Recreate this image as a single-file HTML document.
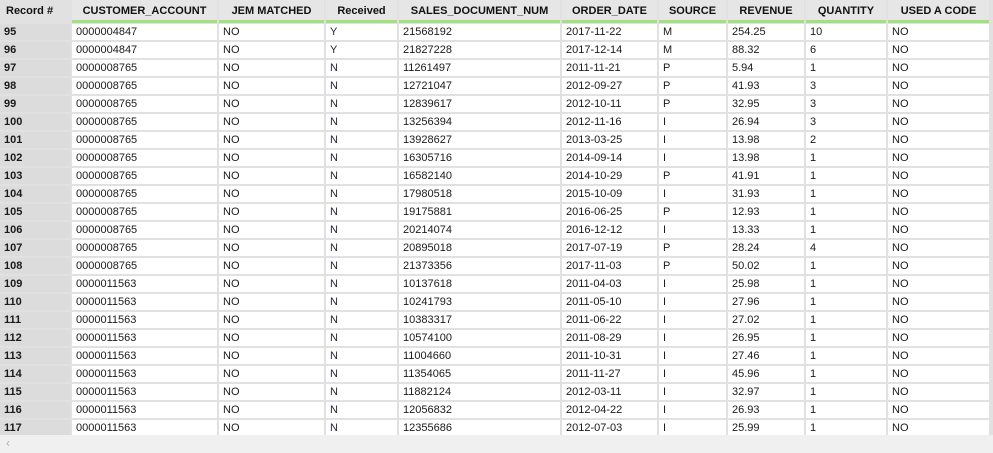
<!DOCTYPE html>
<html><head><style>
body{margin:0;width:993px;height:453px;overflow:hidden;background:#fff;font-family:"Liberation Sans",sans-serif;font-size:11px;color:#1a1a1a;position:relative}
.g{position:absolute;left:0;top:0;width:993px;height:453px;background:#e1e1e1}
.c{position:absolute;height:16px;line-height:17px;background:#fff;padding-left:4px;box-sizing:border-box;white-space:nowrap;overflow:hidden}
.h{position:absolute;top:0;height:23px;background:#e6e6e6;font-weight:bold;text-align:center;box-sizing:border-box;border-bottom:3px solid #9fe27c;line-height:22px;color:#111}
.r{background:#dcdcdc;font-weight:bold}
.sb{position:absolute;left:0;top:435px;width:993px;height:18px;background:#f0f0f0}
</style></head><body>
<div class="g" id="g"></div>
<div class="sb"><span style="position:absolute;left:6px;top:1px;color:#b0b0b0;font-size:12px">&lsaquo;</span></div>
<script>
var L=[0,72,219,326,399,562,659,728,806,888],W=[70,145,105,71,161,95,67,76,80,101];
var H=["Record #","CUSTOMER_ACCOUNT","JEM MATCHED","Received","SALES_DOCUMENT_NUM","ORDER_DATE","SOURCE","REVENUE","QUANTITY","USED A CODE"];
var D=[
["95","0000004847","NO","Y","21568192","2017-11-22","M","254.25","10","NO"],
["96","0000004847","NO","Y","21827228","2017-12-14","M","88.32","6","NO"],
["97","0000008765","NO","N","11261497","2011-11-21","P","5.94","1","NO"],
["98","0000008765","NO","N","12721047","2012-09-27","P","41.93","3","NO"],
["99","0000008765","NO","N","12839617","2012-10-11","P","32.95","3","NO"],
["100","0000008765","NO","N","13256394","2012-11-16","I","26.94","3","NO"],
["101","0000008765","NO","N","13928627","2013-03-25","I","13.98","2","NO"],
["102","0000008765","NO","N","16305716","2014-09-14","I","13.98","1","NO"],
["103","0000008765","NO","N","16582140","2014-10-29","P","41.91","1","NO"],
["104","0000008765","NO","N","17980518","2015-10-09","I","31.93","1","NO"],
["105","0000008765","NO","N","19175881","2016-06-25","P","12.93","1","NO"],
["106","0000008765","NO","N","20214074","2016-12-12","I","13.33","1","NO"],
["107","0000008765","NO","N","20895018","2017-07-19","P","28.24","4","NO"],
["108","0000008765","NO","N","21373356","2017-11-03","P","50.02","1","NO"],
["109","0000011563","NO","N","10137618","2011-04-03","I","25.98","1","NO"],
["110","0000011563","NO","N","10241793","2011-05-10","I","27.96","1","NO"],
["111","0000011563","NO","N","10383317","2011-06-22","I","27.02","1","NO"],
["112","0000011563","NO","N","10574100","2011-08-29","I","26.95","1","NO"],
["113","0000011563","NO","N","11004660","2011-10-31","I","27.46","1","NO"],
["114","0000011563","NO","N","11354065","2011-11-27","I","45.96","1","NO"],
["115","0000011563","NO","N","11882124","2012-03-11","I","32.97","1","NO"],
["116","0000011563","NO","N","12056832","2012-04-22","I","26.93","1","NO"],
["117","0000011563","NO","N","12355686","2012-07-03","I","25.99","1","NO"]];
var s="";
for(var i=0;i<10;i++){s+='<div class="h" style="left:'+L[i]+'px;width:'+W[i]+'px;'+(i==0?'text-align:left;padding-left:6px;border-bottom:none;background:#e1e1e1':'')+'">'+H[i]+'</div>';}
for(var r=0;r<D.length;r++){var t=24+r*18;for(var i=0;i<10;i++){s+='<div class="c'+(i==0?' r':'')+'" style="top:'+t+'px;left:'+L[i]+'px;width:'+W[i]+'px'+(i==3?';color:#2a2438':'')+'">'+D[r][i]+'</div>';}}
document.getElementById('g').innerHTML=s;
</script>
</body></html>
